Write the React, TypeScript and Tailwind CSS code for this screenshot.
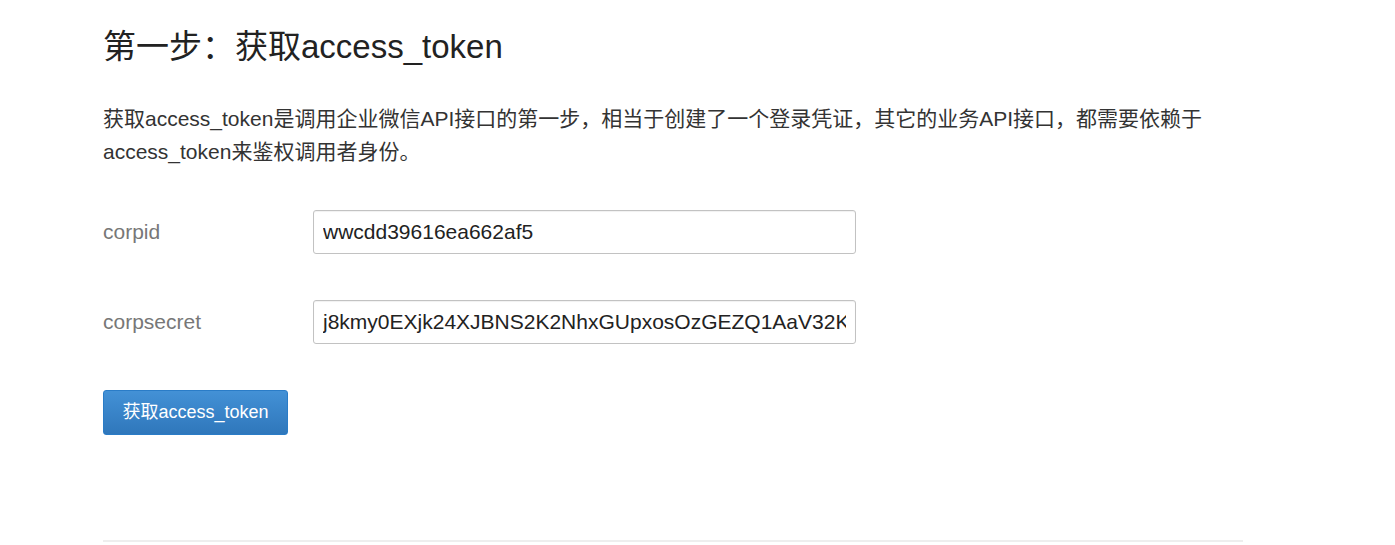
const FONT = "font-['Liberation_Sans','Noto_Sans_CJK_SC',sans-serif]"

function Field({ label, value }: { label: string; value: string }) {
  return (
    <div className="flex items-center h-[44px]">
      <label className="w-[210px] shrink-0 text-[21px] text-[#777]">{label}</label>
      <input
        readOnly
        value={value}
        className="w-[543px] h-[44px] px-[9px] border border-[#c2c2c2] rounded-[3px] text-[21px] text-[#222] bg-white outline-none shadow-[inset_0_1px_1px_rgba(0,0,0,0.06)]"
      />
    </div>
  )
}

export default function App() {
  return (
    <div className={`bg-white min-h-[545px] ${FONT}`}>
      <div className="ml-[103px] w-[1140px] pt-[27px]">
        <h2 className="text-[33px] leading-[40px] text-[#222]">第一步：获取access_token</h2>

        <p className="mt-[35px] text-[21px] leading-[33px] text-[#333] whitespace-nowrap">
          获取access_token是调用企业微信API接口的第一步，相当于创建了一个登录凭证，其它的业务API接口，都需要依赖于
          <br />
          access_token来鉴权调用者身份。
        </p>

        {/* form */}
        <div className="mt-[42px] flex flex-col gap-[46px]">
          <Field label="corpid" value="wwcdd39616ea662af5" />
          <Field label="corpsecret" value="j8kmy0EXjk24XJBNS2K2NhxGUpxosOzGEZQ1AaV32K8" />
        </div>

        <button className="mt-[46px] w-[185px] h-[45px] rounded-[3px] border border-[#2a7cc7] bg-gradient-to-b from-[#4391d6] to-[#2f77bb] text-white text-[18px]">
          获取access_token
        </button>

        <div className="mt-[105px] h-[2px] bg-[#eeeeee]" />
      </div>
    </div>
  )
}
